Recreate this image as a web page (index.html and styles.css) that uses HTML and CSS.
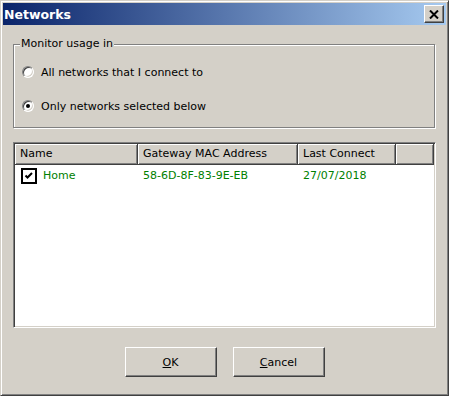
FILE: index.html
```html
<!DOCTYPE html>
<html lang="en">

<head>
    <meta charset="UTF-8">
    <title>Networks</title>
    <link rel="stylesheet" href="styles.css">
</head>

<body>
    <div class="window">
        <div class="titlebar">
            <span class="title">Networks</span>
            <button class="close">
                <svg width="10" height="9" viewBox="0 0 10 9">
                    <path d="M1 0.5 L9 8.5 M9 0.5 L1 8.5" stroke="#000" stroke-width="2" fill="none" />
                </svg>
            </button>
        </div>

        <div class="content">
            <div class="group">
                <span class="group-title">Monitor usage in</span>
                <label class="radio-row"><span class="radio"></span>All networks that I connect to</label>
                <label class="radio-row"><span class="radio checked"></span>Only networks selected below</label>
            </div>

            <div class="list">
                <div class="list-head">
                    <div class="col col-name">Name</div>
                    <div class="col col-mac">Gateway MAC Address</div>
                    <div class="col col-date">Last Connect</div>
                    <div class="col col-fill"></div>
                </div>
                <div class="list-row">
                    <div class="cell col-name">
                        <span class="check">
                            <svg width="16" height="16" viewBox="0 0 16 16">
                                <rect x="1" y="1" width="14" height="14" fill="#fff" stroke="#000" stroke-width="2" />
                                <path d="M4.5 7.5 L6.5 9.5 L11 5" stroke="#000" stroke-width="2" fill="none" />
                            </svg>
                        </span>
                        Home
                    </div>
                    <div class="cell col-mac">58-6D-8F-83-9E-EB</div>
                    <div class="cell col-date">27/07/2018</div>
                </div>
            </div>

            <div class="buttons">
                <button class="btn"><u>O</u>K</button>
                <button class="btn"><u>C</u>ancel</button>
            </div>
        </div>
    </div>
</body>

</html>
```

FILE: styles.css
```css
* {
    margin: 0;
    padding: 0;
    box-sizing: border-box;
}

body {
    background: #d4d0c8;
    font-family: 'DejaVu Sans', Verdana, sans-serif;
    font-size: 11px;
    color: #000;
}

.window {
    width: 449px;
    height: 396px;
    border: 1px solid;
    border-color: #d4d0c8 #404040 #404040 #d4d0c8;
    box-shadow: inset 1px 1px #fff, inset -1px -1px #808080;
    padding: 2px;
    display: flex;
    flex-direction: column;
}

.titlebar {
    height: 22px;
    display: flex;
    align-items: center;
    padding: 0 2px 0 1px;
    background: linear-gradient(to right, #0a246a, #a6caf0);
}

.title {
    color: #fff;
    font-weight: bold;
    font-size: 12.5px;
}

.close {
    margin-left: auto;
    width: 20px;
    height: 18px;
    background: #d4d0c8;
    border: 1px solid;
    border-color: #fff #404040 #404040 #fff;
    box-shadow: inset -1px -1px #808080;
    display: flex;
    align-items: center;
    justify-content: center;
}

.close svg {
    display: block;
}

.content {
    padding: 0 10px;
}

.group {
    position: relative;
    margin-top: 19px;
    width: 422px;
    border: 1px solid #808080;
    box-shadow: 1px 1px 0 #fff, inset 1px 1px 0 #fff;
    padding: 17px 0 11px 8px;
    display: flex;
    flex-direction: column;
    gap: 14px;
}

.group-title {
    position: absolute;
    top: -8px;
    left: 6px;
    padding: 0 1px;
    line-height: 14px;
    background: #d4d0c8;
}

.radio-row {
    height: 20px;
    display: flex;
    align-items: center;
}

.radio {
    width: 12px;
    height: 12px;
    margin-right: 7px;
    border-radius: 50%;
    border: 1px solid;
    border-color: #808080 #fff #fff #808080;
    box-shadow: inset 1px 1px #404040, inset -1px -1px #d4d0c8;
    background: #fff;
    display: flex;
    align-items: center;
    justify-content: center;
}

.radio.checked::after {
    content: "";
    width: 4px;
    height: 4px;
    border-radius: 50%;
    background: #000;
}

.list {
    margin-top: 14px;
    width: 423px;
    height: 186px;
    border: 1px solid;
    border-color: #808080 #fff #fff #808080;
    box-shadow: inset 1px 1px #404040, inset -1px -1px #d4d0c8;
    background: #fff;
    padding: 1px;
}

.list-head {
    display: flex;
    height: 21px;
}

.col {
    background: #d4d0c8;
    border-right: 1px solid #404040;
    border-bottom: 1px solid #404040;
    box-shadow: inset 1px 1px #fff, inset -1px -1px #808080;
    padding-left: 5px;
    line-height: 20px;
    white-space: nowrap;
}

.col-name {
    width: 123px;
}

.col-mac {
    width: 160px;
}

.col-date {
    width: 98px;
}

.col-fill {
    flex: 1;
}

.list-row {
    display: flex;
    height: 21px;
    align-items: center;
    color: #008000;
}

.cell {
    padding-left: 5px;
    display: flex;
    align-items: center;
    white-space: nowrap;
}

.cell.col-name {
    padding-left: 6px;
}

.check {
    margin-right: 6px;
    display: flex;
}

.buttons {
    margin-top: 19px;
    display: flex;
    justify-content: center;
    gap: 16px;
}

.btn {
    width: 92px;
    height: 30px;
    background: #d4d0c8;
    border: 1px solid;
    border-color: #fff #404040 #404040 #fff;
    box-shadow: inset -1px -1px #808080;
    font-family: 'DejaVu Sans', Verdana, sans-serif;
    font-size: 11px;
    color: #000;
}
```
